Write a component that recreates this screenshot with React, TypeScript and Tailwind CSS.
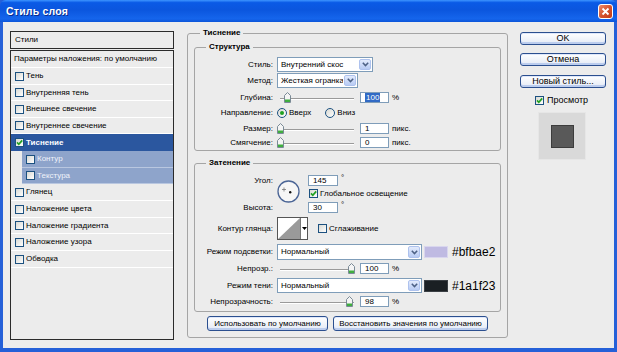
import React from "react";

const FONT = "font-['Liberation_Sans',Arial,sans-serif]";

function Check({ checked }: { checked?: boolean }) {
  return (
    <span className="inline-flex w-[9px] h-[9px] shrink-0 border border-[#1c5180] bg-gradient-to-br from-[#d8d8d2] to-white items-center justify-center">
      {checked && (
        <svg width="7" height="7" viewBox="0 0 7 7">
          <path d="M1 3.4 L2.8 5.3 L6.2 1.4" stroke="#21a121" strokeWidth="1.7" fill="none" />
        </svg>
      )}
    </span>
  );
}

function Radio({ checked }: { checked?: boolean }) {
  return (
    <span className="inline-flex w-[10px] h-[10px] shrink-0 rounded-full border border-[#1c5180] bg-gradient-to-br from-[#d8d8d2] to-white items-center justify-center">
      {checked && <span className="w-[4px] h-[4px] rounded-full bg-[#21a121]" />}
    </span>
  );
}

function Slider({ value, max }: { value: number; max: number }) {
  const x = 3 + (value / max) * 71;
  return (
    <div className="relative w-[81px] h-[11px] shrink-0">
      <div className="absolute left-[3px] right-[4px] top-[6px] h-[2px] border-t border-[#9a9a9a] border-b border-b-white" />
      <svg className="absolute top-0" style={{ left: x - 3.5 }} width="7" height="11" viewBox="0 0 7 11">
        <path d="M0.5 3.5 L3.5 0.5 L6.5 3.5 L6.5 10.5 L0.5 10.5 Z" fill="#f4f4f4" stroke="#7a8a96" strokeWidth="1" />
        <rect x="1" y="7.5" width="5" height="2.5" fill="#3fae3f" />
      </svg>
    </div>
  );
}

function Field({ value, w, selected }: { value: string; w: string; selected?: boolean }) {
  return (
    <div className={`h-[11px] ${w} shrink-0 border border-[#7f9db9] bg-white flex items-center pl-[4px]`}>
      {selected ? <span className="bg-[#316ac5] text-white px-[1px] leading-[9px]">{value}</span> : <span>{value}</span>}
    </div>
  );
}

function Chevron() {
  return (
    <svg width="7" height="5" viewBox="0 0 7 5">
      <path d="M0.8 0.8 L3.5 3.6 L6.2 0.8" stroke="#4d6185" strokeWidth="1.5" fill="none" />
    </svg>
  );
}

function Select({ text, w, h }: { text: string; w: string; h: string }) {
  return (
    <div className={`flex ${w} ${h} shrink-0 border border-[#7f9db9] bg-white`}>
      <span className="flex-1 pl-[3px] flex items-center whitespace-nowrap overflow-hidden">{text}</span>
      <span className="w-[12px] m-[1px] rounded-[2px] bg-gradient-to-b from-[#e3ebfc] to-[#b8cbf3] border border-[#aec2ee] flex items-center justify-center">
        <Chevron />
      </span>
    </div>
  );
}

function Label({ children }: { children: React.ReactNode }) {
  return <div className="w-[78px] shrink-0 text-right pr-0 whitespace-nowrap">{children}</div>;
}

function XPButton({ children, w }: { children: React.ReactNode; w: string }) {
  return (
    <div
      className={`${w} h-[15px] shrink-0 rounded-[3px] border border-[#2b4f8f] bg-gradient-to-b from-white to-[#e4eaf5] shadow-[inset_0_-2px_0_#bccdee,inset_0_1px_0_#dfe8fb] flex items-center justify-center whitespace-nowrap`}
    >
      {children}
    </div>
  );
}

function TitleBar() {
  return (
    <div className="h-[22px] shrink-0 rounded-t-[6px] bg-[linear-gradient(180deg,#3d95ff_0%,#0a5ae6_12%,#0b56de_45%,#1565ec_85%,#0c55d9_100%)] flex items-center pl-[6px] pr-[4px]">
      <span className="text-white font-bold text-[10.5px] [text-shadow:1px_1px_0_#0a2c8c] tracking-[0.2px]">Стиль слоя</span>
      <div className="ml-auto w-[15px] h-[15px] rounded-[3px] border border-white bg-gradient-to-br from-[#ec8a6a] via-[#d5532d] to-[#c23a17] flex items-center justify-center">
        <svg width="9" height="9" viewBox="0 0 9 9">
          <path d="M1.5 1.5 L7.5 7.5 M7.5 1.5 L1.5 7.5" stroke="white" strokeWidth="1.8" />
        </svg>
      </div>
    </div>
  );
}

const items: { label: string; h: string; checked?: boolean; selected?: boolean; sub?: boolean }[] = [
  { label: "Тень", h: "h-[17px]" },
  { label: "Внутренняя тень", h: "h-[16px]" },
  { label: "Внешнее свечение", h: "h-[17px]" },
  { label: "Внутреннее свечение", h: "h-[16px]" },
  { label: "Тиснение", h: "h-[17px]", checked: true, selected: true },
  { label: "Контур", h: "h-[17px]", sub: true },
  { label: "Текстура", h: "h-[16px]", sub: true },
  { label: "Глянец", h: "h-[17px]" },
  { label: "Наложение цвета", h: "h-[17px]" },
  { label: "Наложение градиента", h: "h-[16px]" },
  { label: "Наложение узора", h: "h-[17px]" },
  { label: "Обводка", h: "h-[17px]" },
];

function LeftPanel() {
  return (
    <div className="w-[164px] shrink-0 mt-[9px] flex flex-col">
      <div className="h-[18px] border border-[#2b2b2b] flex items-center pl-[4px]">Стили</div>
      <div className="mt-[1px] h-[290px] border border-[#2b2b2b] flex flex-col">
        <div className="h-[17px] shrink-0 border-b border-white flex items-center pl-[3px] whitespace-nowrap">
          Параметры наложения: по умолчанию
        </div>
        {items.map((it) =>
          it.sub ? (
            <div key={it.label} className={`${it.h} shrink-0 flex`}>
              <div className="ml-[11px] flex-1 bg-[#8ea4cb] border-b border-[#b9c7e0] flex items-center pl-[4px] gap-[2px] text-[#eef2fa]">
                <Check />
                <span>{it.label}</span>
              </div>
            </div>
          ) : (
            <div
              key={it.label}
              className={`${it.h} shrink-0 flex items-center pl-[4px] gap-[2px] ${
                it.selected ? "bg-[#2b579f] text-white font-bold" : "border-b border-white"
              }`}
            >
              <Check checked={it.checked} />
              <span>{it.label}</span>
            </div>
          )
        )}
      </div>
    </div>
  );
}

function Structure() {
  return (
    <fieldset className="border border-[#a5a5a5] rounded-[3px] mt-[4px] pb-[2px]">
      <legend className="ml-[11px] px-[3px] font-bold leading-[10px]">Структура</legend>
      <div className="flex flex-col mt-[5px]">
        <div className="flex items-center gap-[4px] h-[15px]">
          <Label>Стиль:</Label>
          <Select text="Внутренний скос" w="w-[96px]" h="h-[15px]" />
        </div>
        <div className="flex items-center gap-[4px] h-[15px] mt-[1px]">
          <Label>Метод:</Label>
          <Select text="Жесткая огранка" w="w-[81px]" h="h-[15px]" />
        </div>
        <div className="flex items-center h-[11px] mt-[4px]">
          <Label>Глубина:</Label>
          <div className="ml-[4px]"><Slider value={100} max={1000} /></div>
          <div className="ml-[2px]"><Field value="100" w="w-[29px]" selected /></div>
          <span className="ml-[3px]">%</span>
        </div>
        <div className="flex items-center h-[12px] mt-[4px]">
          <Label>Направление:</Label>
          <div className="ml-[4px] flex items-center gap-[2px]">
            <Radio checked />
            <span>Вверх</span>
          </div>
          <div className="ml-[14px] flex items-center gap-[2px]">
            <Radio />
            <span>Вниз</span>
          </div>
        </div>
        <div className="flex items-center h-[11px] mt-[4px]">
          <Label>Размер:</Label>
          <div className="ml-[4px]"><Slider value={0} max={250} /></div>
          <div className="ml-[2px]"><Field value="1" w="w-[29px]" /></div>
          <span className="ml-[3px]">пикс.</span>
        </div>
        <div className="flex items-center h-[11px] mt-[3px]">
          <Label>Смягчение:</Label>
          <div className="ml-[4px]"><Slider value={0} max={16} /></div>
          <div className="ml-[2px]"><Field value="0" w="w-[29px]" /></div>
          <span className="ml-[3px]">пикс.</span>
        </div>
      </div>
    </fieldset>
  );
}

function AngleDial() {
  return (
    <svg width="23" height="23" viewBox="0 0 23 23">
      <circle cx="11.5" cy="11.5" r="10.5" fill="#f6f6f6" stroke="#4b6596" strokeWidth="1.3" />
      <path d="M7 7.5 L7 11.5 M5 9.5 L9 9.5" stroke="#777" strokeWidth="0.8" />
      <circle cx="13.2" cy="12.3" r="1.2" fill="#111" />
    </svg>
  );
}

function ContourBox() {
  return (
    <div className="w-[31px] h-[23px] shrink-0 border border-[#555] bg-white flex">
      <svg width="22" height="21" viewBox="0 0 22 21" className="shrink-0">
        <path d="M0 21 L22 0 L22 21 Z" fill="#9a9a9a" />
      </svg>
      <div className="flex-1 border-l border-[#777] flex items-center justify-center">
        <svg width="5" height="3" viewBox="0 0 5 3">
          <path d="M0 0 L5 0 L2.5 3 Z" fill="#000" />
        </svg>
      </div>
    </div>
  );
}

function Shading() {
  return (
    <fieldset className="border border-[#a5a5a5] rounded-[3px] mt-[7px] pb-[4px]">
      <legend className="ml-[11px] px-[3px] font-bold leading-[10px]">Затенение</legend>
      <div className="flex flex-col">
        <div className="flex items-start mt-[7px]">
          <div className="w-[78px] shrink-0 flex flex-col items-end">
            <div className="h-[11px] flex items-center">Угол:</div>
            <div className="h-[16px]" />
            <div className="h-[11px] flex items-center">Высота:</div>
          </div>
          <div className="ml-[4px] mt-[5px]">
            <AngleDial />
          </div>
          <div className="ml-[8px] flex flex-col">
            <div className="flex items-start">
              <Field value="145" w="w-[30px]" />
              <span className="ml-[3px] text-[8px] leading-[6px]">°</span>
            </div>
            <div className="flex items-center gap-[2px] mt-[3px] h-[9px] ml-[1px]">
              <Check checked />
              <span className="whitespace-nowrap">Глобальное освещение</span>
            </div>
            <div className="flex items-start mt-[4px]">
              <Field value="30" w="w-[30px]" />
              <span className="ml-[3px] text-[8px] leading-[6px]">°</span>
            </div>
          </div>
        </div>
        <div className="flex items-center h-[23px] mt-[4px]">
          <Label>Контур глянца:</Label>
          <div className="ml-[4px]"><ContourBox /></div>
          <div className="ml-[10px] flex items-center gap-[2px]">
            <Check />
            <span>Сглаживание</span>
          </div>
        </div>
        <div className="flex items-center h-[16px] mt-[4px]">
          <Label>Режим подсветки:</Label>
          <div className="ml-[4px]"><Select text="Нормальный" w="w-[145px]" h="h-[16px]" /></div>
          <div className="ml-[2px] w-[24px] h-[12px] bg-[#bfbae2] border border-[#d9d6ee]" />
          <span className={`ml-[4px] text-[12px] ${FONT}`}>#bfbae2</span>
        </div>
        <div className="flex items-center h-[11px] mt-[3px]">
          <Label>Непрозр.:</Label>
          <div className="ml-[4px]"><Slider value={100} max={100} /></div>
          <div className="ml-[2px]"><Field value="100" w="w-[29px]" /></div>
          <span className="ml-[3px]">%</span>
        </div>
        <div className="flex items-center h-[15px] mt-[4px]">
          <Label>Режим тени:</Label>
          <div className="ml-[4px]"><Select text="Нормальный" w="w-[145px]" h="h-[15px]" /></div>
          <div className="ml-[2px] w-[24px] h-[12px] bg-[#1a1f23] border border-[#3a3f44]" />
          <span className={`ml-[4px] text-[12px] ${FONT}`}>#1a1f23</span>
        </div>
        <div className="flex items-center h-[11px] mt-[3px]">
          <Label>Непрозрачность:</Label>
          <div className="ml-[4px]"><Slider value={98} max={100} /></div>
          <div className="ml-[2px]"><Field value="98" w="w-[29px]" /></div>
          <span className="ml-[3px]">%</span>
        </div>
      </div>
    </fieldset>
  );
}

function Main() {
  return (
    <fieldset className="w-[321px] shrink-0 ml-[13px] mt-[6px] border border-[#a5a5a5] rounded-[3px] px-[6px] pb-[6px]">
      <legend className="ml-[6px] px-[3px] font-bold leading-[10px]">Тиснение</legend>
      <Structure />
      <Shading />
      <div className="flex justify-center gap-[5px] mt-[4px]">
        <XPButton w="w-[121px]">Использовать по умолчанию</XPButton>
        <XPButton w="w-[155px]">Восстановить значения по умолчанию</XPButton>
      </div>
    </fieldset>
  );
}

function RightCol() {
  return (
    <div className="w-[86px] shrink-0 ml-[12px] mt-[10px] flex flex-col items-stretch">
      <div className="h-[13px] rounded-[3px] border border-[#2b4f8f] bg-gradient-to-b from-white to-[#e4eaf5] shadow-[inset_0_-2px_0_#bccdee,inset_0_1px_0_#dfe8fb] flex items-center justify-center text-[9px]">OK</div>
      <div className="mt-[8px] h-[13px] rounded-[3px] border border-[#2b4f8f] bg-gradient-to-b from-white to-[#e4eaf5] shadow-[inset_0_-2px_0_#bccdee,inset_0_1px_0_#dfe8fb] flex items-center justify-center text-[9px]">Отмена</div>
      <div className="mt-[9px] h-[13px] rounded-[3px] border border-[#2b4f8f] bg-gradient-to-b from-white to-[#e4eaf5] shadow-[inset_0_-2px_0_#bccdee,inset_0_1px_0_#dfe8fb] flex items-center justify-center text-[9px]">Новый стиль...</div>
      <div className="mt-[8px] flex items-center gap-[3px] pl-[15px] h-[9px] text-[9px]">
        <Check checked />
        <span>Просмотр</span>
      </div>
      <div className="mt-[7px] ml-[18px] w-[48px] h-[48px] bg-[#d9d9d9] border border-[#e6e6e6] flex items-center justify-center">
        <div className="w-[23px] h-[23px] bg-[#595959] border border-[#3c3c3c]" />
      </div>
    </div>
  );
}

export default function App() {
  return (
    <div className={`w-[617px] h-[352px] overflow-hidden bg-[#2560d8] flex flex-col text-[8px] leading-none text-black ${FONT}`}>
      <TitleBar />
      <div className="flex-1 mx-[3px] mb-[4px] bg-[#ececec] flex items-start pl-[7px] pr-[8px]">
        <LeftPanel />
        <Main />
        <RightCol />
      </div>
    </div>
  );
}
